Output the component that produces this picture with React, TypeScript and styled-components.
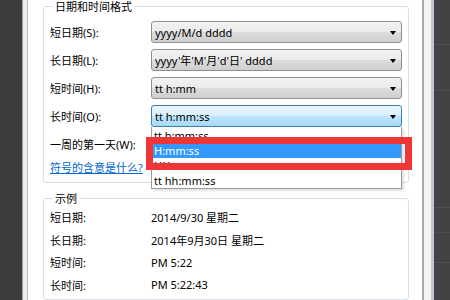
import React from 'react';
import styled, { createGlobalStyle } from 'styled-components';

const GlobalStyle = createGlobalStyle`
  html, body {
    margin: 0;
    padding: 0;
    width: 450px;
    height: 300px;
    overflow: hidden;
    background: #3b3b3b;
  }
  body {
    font-family: "Noto Sans", "Noto Sans CJK SC", sans-serif;
    font-size: 11px;
    color: #000;
  }
`;

type ComboProps = { value: string; focused?: boolean };

const formatRows: { label: string; value: string }[] = [
    { label: '短日期(S):', value: 'yyyy/M/d dddd' },
    { label: '长日期(L):', value: "yyyy'年'M'月'd'日' dddd" },
    { label: '短时间(H):', value: 'tt h:mm' },
];

const listItems = ['tt h:mm:ss', 'H:mm:ss', 'HH:mm:ss', 'tt hh:mm:ss'];

const samples: { label: string; value: string }[] = [
    { label: '短日期:', value: '2014/9/30 星期二' },
    { label: '长日期:', value: '2014年9月30日 星期二' },
    { label: '短时间:', value: 'PM 5:22' },
    { label: '长时间:', value: 'PM 5:22:43' },
];

const Combo = ({ value, focused }: ComboProps) => (
    <ComboBox $focused={focused}>
        <span>{value}</span>
        <Arrow />
    </ComboBox>
);

const App = () => {
    return (
        <>
            <GlobalStyle />
            <Screen>
                <DarkLeft />
                <FrameLeft />
                <Content>
                    <Group>
                        <Legend>日期和时间格式</Legend>
                        <FormGrid>
                            {formatRows.map((r) => (
                                <React.Fragment key={r.label}>
                                    <Label>{r.label}</Label>
                                    <Combo value={r.value} />
                                </React.Fragment>
                            ))}
                            <Label>长时间(O):</Label>
                            <ComboWrap>
                                <Combo value="tt h:mm:ss" focused />
                                <DropList>
                                    {listItems.map((item, i) => (
                                        <ListItem key={item} $selected={i === 1}>{item}</ListItem>
                                    ))}
                                    <Highlight />
                                </DropList>
                            </ComboWrap>
                            <Label>一周的第一天(W):</Label>
                            <Combo value="星期一" />
                        </FormGrid>
                        <HelpLink>符号的含意是什么?</HelpLink>
                    </Group>
                    <SampleGroup>
                        <Legend>示例</Legend>
                        <SampleGrid>
                            {samples.map((s) => (
                                <React.Fragment key={s.label}>
                                    <Label>{s.label}</Label>
                                    <span>{s.value}</span>
                                </React.Fragment>
                            ))}
                        </SampleGrid>
                    </SampleGroup>
                </Content>
                <FrameRight />
                <DarkRight />
            </Screen>
        </>
    );
};
export default App;

const Screen = styled.div`
  display: flex;
  width: 450px;
  height: 300px;
`;

const DarkLeft = styled.div`
  width: 22px;
  background: #3c3c3c;
`;

const FrameLeft = styled.div`
  width: 4px;
  background: #ededed;
  border-left: 1px solid #9d9d9d;
  border-right: 1px solid #b9b9b9;
`;

const FrameRight = styled.div`
  width: 7px;
  background: #f3f3f3;
  border-left: 2px solid #a9a9a9;
  border-right: 3px solid #cbbdd4;
`;

const DarkRight = styled.div`
  flex: 1;
  background:
    linear-gradient(#505050, #505050) 0 44px / 100% 1px no-repeat,
    linear-gradient(#4f4f4f, #4f4f4f) 0 90px / 100% 1px no-repeat,
    linear-gradient(#515151, #515151) 0 207px / 100% 1px no-repeat,
    linear-gradient(#4e4e4e, #4e4e4e) 0 232px / 100% 1px no-repeat,
    linear-gradient(#505050, #505050) 0 262px / 100% 1px no-repeat,
    #434343;
`;

const Content = styled.div`
  width: 394px;
  background: #fff;
  padding: 0 13px 0 15px;
  box-sizing: border-box;
`;

const Group = styled.fieldset`
  margin: 0;
  padding: 8px 6px 8px 6px;
  border: 1px solid #d5dfe5;
  border-radius: 3px;
  min-width: 0;
`;

const SampleGroup = styled(Group)`
  margin-top: 9px;
  padding: 1px 6px 3px 6px;
`;

const Legend = styled.legend`
  padding: 0 2px;
  margin-left: 3px;
  line-height: 13px;
  font-size: 11px;
`;

const FormGrid = styled.div`
  display: grid;
  grid-template-columns: 101px 1fr;
  grid-auto-rows: 22px;
  row-gap: 6px;
  align-items: center;
`;

const SampleGrid = styled.div`
  display: grid;
  grid-template-columns: 101px 1fr;
  grid-auto-rows: 22.5px;
  align-items: center;
  white-space: nowrap;
`;

const Label = styled.span`
  white-space: nowrap;
`;

const ComboWrap = styled.div`
  position: relative;
  height: 22px;
`;

const ComboBox = styled.div<{ $focused?: boolean }>`
  height: 22px;
  box-sizing: border-box;
  display: flex;
  align-items: center;
  justify-content: space-between;
  padding: 0 5px 0 3px;
  border: 1px solid ${(p) => (p.$focused ? '#3c7fb1' : '#8e8f8f')};
  border-radius: 3px;
  white-space: nowrap;
  background: ${(p) =>
    p.$focused
        ? 'linear-gradient(#eaf6fd 0%, #d9f0fc 48%, #bee6fd 50%, #a7d9f5 100%)'
        : 'linear-gradient(#f2f2f2 0%, #ebebeb 48%, #dddddd 50%, #cfcfcf 100%)'};
`;

const Arrow = styled.i`
  width: 0;
  height: 0;
  border-left: 3.5px solid transparent;
  border-right: 3.5px solid transparent;
  border-top: 4px solid #000;
  margin-top: 1px;
`;

const DropList = styled.div`
  position: absolute;
  top: 22px;
  left: 0;
  right: 0;
  z-index: 2;
  background: #fff;
  border: 1px solid #9c9c9c;
  border-top: none;
  padding-top: 1px;
  box-shadow: 2px 2px 2px rgba(0, 0, 0, 0.12);
`;

const ListItem = styled.div<{ $selected?: boolean }>`
  height: 15px;
  line-height: 15px;
  padding-left: 2px;
  white-space: nowrap;
  background: ${(p) => (p.$selected ? '#3399ff' : 'transparent')};
  color: ${(p) => (p.$selected ? '#fff' : '#000')};
`;

const Highlight = styled.div`
  position: absolute;
  left: -6px;
  top: 10px;
  width: 266px;
  height: 33px;
  box-sizing: border-box;
  border: 7px solid #ef3535;
`;

const HelpLink = styled.a`
  display: block;
  margin-top: 6px;
  height: 13px;
  line-height: 13px;
  color: #0066cc;
  text-decoration: underline;
  cursor: pointer;
  width: max-content;
`;
